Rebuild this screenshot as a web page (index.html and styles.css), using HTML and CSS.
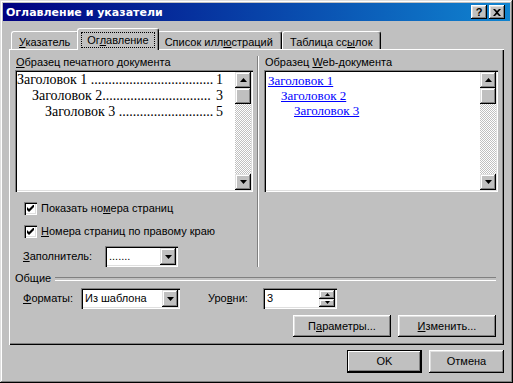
FILE: index.html
```html
<!DOCTYPE html>
<html lang="ru">
<head>
    <meta charset="UTF-8">
    <title>Оглавление и указатели</title>
    <link rel="stylesheet" href="styles.css">
</head>
<body>
<div class="window">
    <div class="titlebar">
        <span class="title">Оглавление и указатели</span>
        <div class="title-buttons">
            <span class="title-btn">?</span>
            <span class="title-btn">
                <svg width="8" height="7" viewBox="0 0 8 7"><path d="M0 0h2l2 2 2-2h2L5 3.5 8 7H6L4 5 2 7H0l3-3.5z" fill="#000"/></svg>
            </span>
        </div>
    </div>

    <div class="dialog">
        <div class="tabs">
            <div class="tab"><u>У</u>казатель</div>
            <div class="tab tab-active"><span class="focus-ring">Ог<u>л</u>авление</span></div>
            <div class="tab">Список илл<u>ю</u>страций</div>
            <div class="tab">Таблица сс<u>ы</u>лок</div>
        </div>

        <div class="panel">
            <div class="samples">
                <div class="sample-print">
                    <div class="caption"><u>О</u>бразец печатного документа</div>
                    <div class="listbox">
                        <div class="toc-print">
                            <div class="toc-line"><span>Заголовок 1 ...................................</span><span class="page-no">1</span></div>
                            <div class="toc-line level-2"><span>Заголовок 2...............................</span><span class="page-no">3</span></div>
                            <div class="toc-line level-3"><span>Заголовок 3 ...........................</span><span class="page-no">5</span></div>
                        </div>
                        <div class="scrollbar">
                            <span class="sb-btn"><svg width="7" height="4" viewBox="0 0 7 4"><path d="M3.5 0L7 4H0z" fill="#000"/></svg></span>
                            <span class="sb-thumb"></span>
                            <span class="sb-track"></span>
                            <span class="sb-btn"><svg width="7" height="4" viewBox="0 0 7 4"><path d="M0 0h7L3.5 4z" fill="#000"/></svg></span>
                        </div>
                    </div>

                    <div class="check">
                        <span class="check-box"><svg width="7" height="7" viewBox="0 0 7 7"><path d="M0 2l2 2 5-5v3L2 7 0 5z" fill="#000"/></svg></span>
                        <span>Показать но<u>м</u>ера страниц</span>
                    </div>
                    <div class="check">
                        <span class="check-box"><svg width="7" height="7" viewBox="0 0 7 7"><path d="M0 2l2 2 5-5v3L2 7 0 5z" fill="#000"/></svg></span>
                        <span><u>Н</u>омера страниц по правому краю</span>
                    </div>

                    <div class="field-row fill-row">
                        <span class="field-label label-fill"><u>З</u>аполнитель:</span>
                        <div class="combo combo-fill">
                            <span class="combo-value">.......</span>
                            <span class="combo-btn"><svg width="7" height="4" viewBox="0 0 7 4"><path d="M0 0h7L3.5 4z" fill="#000"/></svg></span>
                        </div>
                    </div>
                </div>

                <div class="sample-web">
                    <div class="caption">Образец <u>W</u>eb-документа</div>
                    <div class="listbox">
                        <div class="toc-web">
                            <a class="toc-link">Заголовок 1</a>
                            <a class="toc-link level-2">Заголовок 2</a>
                            <a class="toc-link level-3">Заголовок 3</a>
                        </div>
                        <div class="scrollbar">
                            <span class="sb-btn"><svg width="7" height="4" viewBox="0 0 7 4"><path d="M3.5 0L7 4H0z" fill="#000"/></svg></span>
                            <span class="sb-thumb"></span>
                            <span class="sb-track"></span>
                            <span class="sb-btn"><svg width="7" height="4" viewBox="0 0 7 4"><path d="M0 0h7L3.5 4z" fill="#000"/></svg></span>
                        </div>
                    </div>
                </div>
            </div>

            <div class="group-title"><span>Общие</span></div>

            <div class="field-row general-row">
                <span class="field-label label-formats"><u>Ф</u>орматы:</span>
                <div class="combo combo-formats">
                    <span class="combo-value">Из шаблона</span>
                    <span class="combo-btn"><svg width="7" height="4" viewBox="0 0 7 4"><path d="M0 0h7L3.5 4z" fill="#000"/></svg></span>
                </div>
                <span class="field-label label-levels">Уро<u>в</u>ни:</span>
                <div class="spin">
                    <span class="combo-value">3</span>
                    <div class="spin-btns">
                        <span class="spin-btn"><svg width="5" height="3" viewBox="0 0 5 3"><path d="M2.5 0L5 3H0z" fill="#000"/></svg></span>
                        <span class="spin-btn"><svg width="5" height="3" viewBox="0 0 5 3"><path d="M0 0h5L2.5 3z" fill="#000"/></svg></span>
                    </div>
                </div>
            </div>

            <div class="panel-buttons">
                <span class="btn btn-wide">П<u>а</u>раметры...</span>
                <span class="btn btn-wide"><u>И</u>зменить...</span>
            </div>
        </div>

        <div class="footer">
            <span class="btn btn-default">OK</span>
            <span class="btn">Отмена</span>
        </div>
    </div>
</div>
</body>
</html>
```

FILE: styles.css
```css
* {
    box-sizing: border-box;
}
body {
    margin: 0;
    background-color: #c0c0c0;
    font-family: "Liberation Sans", Arial, sans-serif;
    font-size: 11px;
    line-height: 13px;
    color: #000;
}
u {
    text-decoration-thickness: 1px;
    text-underline-offset: 1px;
}

/* window frame */
.window {
    width: 513px;
    height: 383px;
    padding: 3px;
    background-color: #c0c0c0;
    box-shadow: inset -1px -1px #000, inset 1px 1px #dfdfdf, inset -2px -2px #808080, inset 2px 2px #fff;
}
.titlebar {
    height: 18px;
    display: flex;
    align-items: center;
    justify-content: space-between;
    padding: 0 5px 0 3px;
    background: linear-gradient(to right, #000080, #1084d0);
}
.title {
    color: #fff;
    font-family: "DejaVu Sans", sans-serif;
    font-weight: bold;
    font-size: 11px;
}
.title-buttons {
    display: flex;
    gap: 2px;
}
.title-btn {
    width: 16px;
    height: 14px;
    display: flex;
    align-items: center;
    justify-content: center;
    font-weight: bold;
    font-size: 11px;
    background-color: #c0c0c0;
    box-shadow: inset -1px -1px #000, inset 1px 1px #fff, inset -2px -2px #808080, inset 2px 2px #dfdfdf;
}

.dialog {
    padding: 7px 0 0 6px;
}

/* tabs */
.tabs {
    display: flex;
    align-items: flex-end;
    height: 21px;
    padding-left: 2px;
}
.tab {
    height: 18px;
    padding: 4px 8px 0 7px;
    border: 1px solid;
    border-color: #fff #000 transparent #fff;
    border-bottom: 0;
    border-radius: 3px 3px 0 0;
    box-shadow: inset -1px 0 #808080;
    white-space: nowrap;
}
.tab-active {
    position: relative;
    z-index: 1;
    height: 22px;
    margin: 0 -2px -1px;
    padding: 3px 3px 0;
    background-color: #c0c0c0;
}
.focus-ring {
    display: inline-block;
    padding: 0 5px;
    border: 1px dotted #000;
    line-height: 14px;
}

/* tab panel */
.panel {
    width: 495px;
    height: 296px;
    padding: 7px 6px 0 6px;
    box-shadow: inset 1px 1px #fff, inset -1px -1px #000, inset -2px -2px #808080;
}
.samples {
    display: flex;
}
.sample-print {
    width: 238px;
    margin-right: 4px;
}
.sample-web {
    flex: 1;
    padding-left: 6px;
    border-left: 1px solid #808080;
    box-shadow: inset 1px 0 #fff;
}
.caption {
    padding-left: 1px;
    margin-bottom: 1px;
}

/* preview boxes */
.listbox {
    height: 122px;
    display: flex;
    padding: 2px;
    background-color: #fff;
    box-shadow: inset 1px 1px #808080, inset 2px 2px #000, inset -1px -1px #fff, inset -2px -2px #dfdfdf;
}
.toc-print {
    flex: 1;
    min-width: 0;
    padding-right: 12px;
    font-family: "Liberation Serif", "Times New Roman", serif;
    font-size: 14px;
    line-height: 16px;
}
.toc-line {
    display: flex;
    justify-content: space-between;
    white-space: nowrap;
}
.toc-line.level-2 {
    padding-left: 15px;
}
.toc-line.level-3 {
    padding-left: 28px;
}
.toc-web {
    flex: 1;
    padding: 1px 0 0 2px;
    font-family: "Liberation Serif", "Times New Roman", serif;
    font-size: 13px;
    line-height: 15px;
}
.toc-link {
    display: block;
    color: #0000ff;
    text-decoration: underline;
}
.toc-link.level-2 {
    padding-left: 13px;
}
.toc-link.level-3 {
    padding-left: 26px;
}

/* scrollbars */
.scrollbar {
    width: 16px;
    display: flex;
    flex-direction: column;
}
.sb-btn,
.sb-thumb {
    height: 16px;
    display: flex;
    align-items: center;
    justify-content: center;
    background-color: #c0c0c0;
    box-shadow: inset -1px -1px #000, inset 1px 1px #dfdfdf, inset -2px -2px #808080, inset 2px 2px #fff;
}
.sb-track {
    flex: 1;
    background: repeating-conic-gradient(#fff 0 25%, #c0c0c0 0 50%) 0 0 / 2px 2px;
}

/* checkboxes */
.check {
    display: flex;
    align-items: center;
    gap: 4px;
    margin: 10px 0 0 9px;
}
.check-box {
    width: 13px;
    height: 13px;
    display: flex;
    align-items: center;
    justify-content: center;
    background-color: #fff;
    box-shadow: inset 1px 1px #808080, inset 2px 2px #000, inset -1px -1px #fff, inset -2px -2px #dfdfdf;
}

/* fields */
.field-row {
    display: flex;
    align-items: center;
    padding-left: 8px;
}
.fill-row {
    margin-top: 8px;
}
.label-fill {
    width: 82px;
}
.label-formats {
    width: 58px;
}
.label-levels {
    width: 55px;
    margin-left: 28px;
}
.combo,
.spin {
    height: 21px;
    display: flex;
    padding: 2px;
    background-color: #fff;
    box-shadow: inset 1px 1px #808080, inset 2px 2px #000, inset -1px -1px #fff, inset -2px -2px #dfdfdf;
}
.combo-fill {
    width: 73px;
}
.combo-formats {
    width: 99px;
}
.spin {
    width: 74px;
}
.combo-value {
    flex: 1;
    padding: 2px 0 0 2px;
}
.combo-btn {
    width: 16px;
    display: flex;
    align-items: center;
    justify-content: center;
    background-color: #c0c0c0;
    box-shadow: inset -1px -1px #000, inset 1px 1px #dfdfdf, inset -2px -2px #808080, inset 2px 2px #fff;
}
.spin-btns {
    width: 16px;
    display: flex;
    flex-direction: column;
}
.spin-btn {
    flex: 1;
    display: flex;
    align-items: center;
    justify-content: center;
    background-color: #c0c0c0;
    box-shadow: inset -1px -1px #000, inset 1px 1px #dfdfdf, inset -2px -2px #808080, inset 2px 2px #fff;
}

/* "Общие" group */
.group-title {
    display: flex;
    align-items: center;
    gap: 4px;
    margin-top: 5px;
}
.group-title::after {
    content: "";
    flex: 1;
    height: 2px;
    margin-right: 2px;
    border-top: 1px solid #808080;
    border-bottom: 1px solid #fff;
}
.general-row {
    margin-top: 3px;
}

/* buttons */
.panel-buttons {
    display: flex;
    justify-content: flex-end;
    gap: 7px;
    margin: 6px 2px 0 0;
}
.btn {
    width: 75px;
    height: 23px;
    display: flex;
    align-items: center;
    justify-content: center;
    background-color: #c0c0c0;
    box-shadow: inset -1px -1px #000, inset 1px 1px #fff, inset -2px -2px #808080, inset 2px 2px #dfdfdf;
}
.btn-wide {
    width: 98px;
    height: 22px;
}
.btn-default {
    box-shadow: inset 0 0 0 1px #000, inset -2px -2px #000, inset 2px 2px #fff, inset -3px -3px #808080;
}
.footer {
    display: flex;
    justify-content: flex-end;
    gap: 7px;
    width: 495px;
    margin-top: 5px;
}
```
